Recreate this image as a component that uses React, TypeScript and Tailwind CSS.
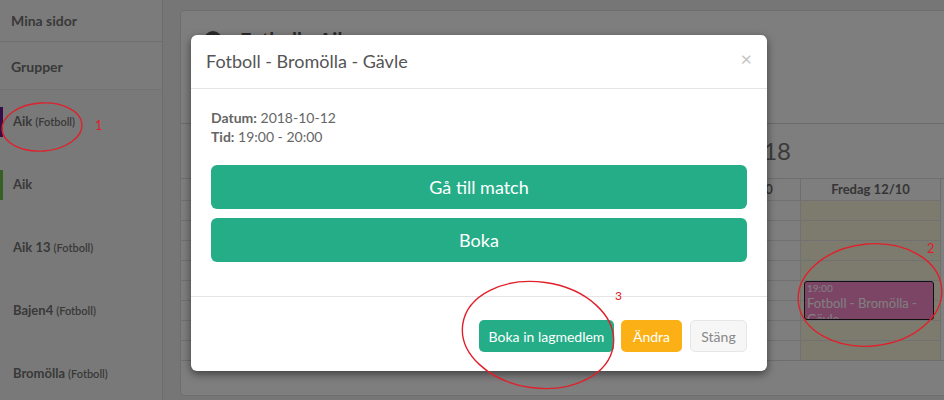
import React from "react";

const groups = [
  { name: "Aik", sport: "(Fotboll)", bar: "bg-[#6a1d8c]" },
  { name: "Aik", sport: "", bar: "bg-[#6cc24a]" },
  { name: "Aik 13", sport: "(Fotboll)", bar: "bg-transparent" },
  { name: "Bajen4", sport: "(Fotboll)", bar: "bg-transparent" },
  { name: "Bromölla", sport: "(Fotboll)", bar: "bg-transparent" },
];

const days = ["Måndag 8/10", "Tisdag 9/10", "Onsdag 10/10", "Torsdag 11/10", "Fredag 12/10"];
const times = ["16:00", "", "17:00", "", "18:00", "", "19:00", ""];

function Sidebar() {
  return (
    <aside className="flex w-[163px] shrink-0 flex-col overflow-hidden border-r border-[#d8d8d8] bg-[#f3f3f3]">
      <div className="flex h-[42px] shrink-0 items-center border-b border-[#dedede] bg-[#f7f7f7] px-[11px] text-[14px] font-bold text-[#727272]">
        Mina sidor
      </div>
      <div className="flex h-[48px] shrink-0 items-center border-b border-[#e4e4e4] bg-[#f7f7f7] px-[11px] pt-[2px] text-[14px] font-bold text-[#727272]">
        Grupper
      </div>
      {groups.map((g, i) => (
        <div key={i} className="flex h-[63px] shrink-0 items-center pt-[1px]">
          <span className={`h-[30px] w-[3px] ${g.bar}`} />
          <span className="pl-[10px] text-[13px] font-bold text-[#727272]">
            {g.name}
            {g.sport && (
              <span className="pl-[3px] text-[11px] font-semibold">{g.sport}</span>
            )}
          </span>
        </div>
      ))}
    </aside>
  );
}

function Calendar() {
  return (
    <div className="flex-1 pl-[17px] pt-[10px]">
      <div className="h-[386px] w-[780px] rounded-l-[4px] border border-[#dcdcdc] bg-[#fdfdfd]">
        <div className="flex h-[113px] items-start gap-[18px] border-b border-[#d6d6d6] px-[23px] pt-[20px]">
          <span className="h-[18px] w-[18px] rounded-full bg-[#555]" />
          <span className="text-[20px] font-bold leading-[18px] text-[#555]">Fotboll - Aik</span>
        </div>
        <div className="flex h-[54px] items-center">
          <span className="w-[610px] text-right text-[24px] text-[#777]">Oktober 2018</span>
        </div>
        <div className="grid grid-cols-[60px_140px_140px_140px_140px_140px] border-y border-[#dcdcdc]">
          <div className="h-[21px] border-r border-[#dcdcdc]" />
          {days.map((d) => (
            <div
              key={d}
              className="flex h-[21px] items-center justify-center border-r border-[#dcdcdc] text-[13px] font-bold text-[#6b6b6b]"
            >
              {d}
            </div>
          ))}
          {times.map((t, r) => (
            <React.Fragment key={r}>
              <div className="h-[20px] border-r border-t border-[#e2e2e2] pr-[4px] text-right text-[11px] text-[#777]">
                {t}
              </div>
              {days.map((d, c) => (
                <div
                  key={d}
                  className={`relative h-[20px] border-r border-t border-[#e2e2e2] ${
                    c === 4 ? "bg-[#fbf7dc]" : ""
                  }`}
                >
                  {c === 4 && r === 4 && (
                    <div className="absolute left-[3px] right-[6px] top-[0px] z-10 h-[39px] overflow-hidden rounded-[3px] border border-[#222] bg-[#f98acb] px-[2px] leading-tight text-[#ffffff]">
                      <div className="text-[10px]">19:00</div>
                      <div className="text-[13px]">Fotboll - Bromölla - Gävle</div>
                    </div>
                  )}
                </div>
              ))}
            </React.Fragment>
          ))}
        </div>
      </div>
    </div>
  );
}

function Modal() {
  return (
    <div className="absolute left-[191px] top-[35px] z-30 flex h-[336px] w-[576px] flex-col rounded-[6px] bg-white shadow-[0_3px_9px_rgba(0,0,0,0.5)]">
      <div className="flex h-[54px] items-center justify-between border-b border-[#e5e5e5] px-[15px]">
        <h4 className="text-[18px] text-[#555]">Fotboll - Bromölla - Gävle</h4>
        <span className="mb-[7px] text-[20px] leading-none text-[#c4c4c4]">×</span>
      </div>
      <div className="flex flex-col px-[20px] pt-[19px] text-[14px] leading-[19px] text-[#666]">
        <p>
          <b>Datum:</b> 2018-10-12
        </p>
        <p>
          <b>Tid:</b> 19:00 - 20:00
        </p>
        <button className="mt-[19px] h-[44px] rounded-[6px] bg-[#25ad88] text-[18px] text-white">
          Gå till match
        </button>
        <button className="mt-[9px] h-[44px] rounded-[6px] bg-[#25ad88] text-[18px] text-white">
          Boka
        </button>
      </div>
      <div className="mt-[34px] flex flex-1 items-start justify-end gap-[7px] border-t border-[#e5e5e5] px-[20px] pt-[23px]">
        <button className="h-[32px] w-[135px] rounded-[5px] bg-[#25ad88] text-[14px] text-white">
          Boka in lagmedlem
        </button>
        <button className="h-[32px] w-[61px] rounded-[5px] bg-[#fbb116] text-[14px] text-white">
          Ändra
        </button>
        <button className="ml-[1px] h-[32px] w-[57px] rounded-[5px] border border-[#e6e6e6] bg-[#f6f6f6] text-[14px] text-[#888]">
          Stäng
        </button>
      </div>
    </div>
  );
}

function Annotations() {
  return (
    <>
      <svg className="pointer-events-none absolute inset-0 z-40" width="944" height="400">
        <g fill="none" stroke="#e0202b" strokeWidth="1.4">
          <ellipse cx="42" cy="127" rx="40" ry="24" transform="rotate(-4 42 127)" />
          <ellipse cx="870" cy="295" rx="72" ry="51" transform="rotate(-6 870 295)" />
          <ellipse cx="538" cy="335" rx="76" ry="53" transform="rotate(8 538 335)" />
        </g>
      </svg>
      <span className="absolute left-[95px] top-[116px] z-40 text-[13px] text-[#e0202b]">1</span>
      <span className="absolute left-[927px] top-[239px] z-40 text-[13px] text-[#e0202b]">2</span>
      <span className="absolute left-[615px] top-[287px] z-40 text-[12px] text-[#e0202b]">3</span>
    </>
  );
}

export default function App() {
  return (
    <div className="relative flex h-[400px] w-[944px] overflow-hidden bg-[#ececec] font-['Lato','Liberation_Sans',sans-serif]">
      <Sidebar />
      <Calendar />
      <div className="absolute inset-0 z-20 bg-black/50" />
      <Modal />
      <Annotations />
    </div>
  );
}
